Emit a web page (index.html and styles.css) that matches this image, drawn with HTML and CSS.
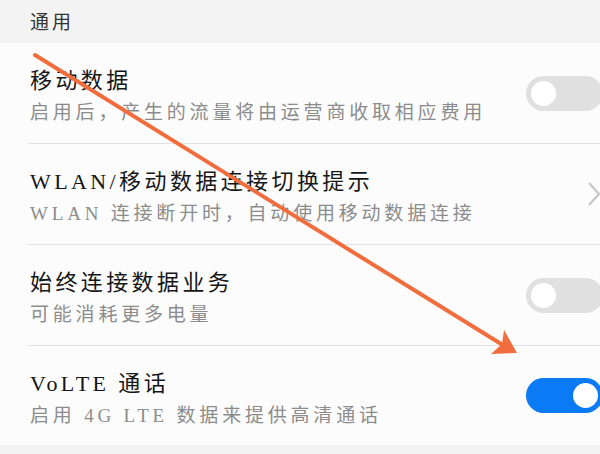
FILE: index.html
```html
<!DOCTYPE html>
<html lang="zh-CN">
<head>
<meta charset="utf-8">
<link rel="stylesheet" href="styles.css">
</head>
<body>
<div class="screen">
  <div class="section-head">通用</div>
  <div class="list">
    <div class="row">
      <div class="texts">
        <div class="title">移动数据</div>
        <div class="sub">启用后，产生的流量将由运营商收取相应费用</div>
      </div>
      <div class="toggle"><span class="knob"></span></div>
    </div>
    <div class="row">
      <div class="texts">
        <div class="title">WLAN/移动数据连接切换提示</div>
        <div class="sub">WLAN 连接断开时，自动使用移动数据连接</div>
      </div>
      <svg class="chevron" width="14" height="24" viewBox="0 0 14 24"><path d="M2 1 L12 12 L2 23" fill="none" stroke="#c6c6c6" stroke-width="2.2"/></svg>
    </div>
    <div class="row">
      <div class="texts">
        <div class="title">始终连接数据业务</div>
        <div class="sub">可能消耗更多电量</div>
      </div>
      <div class="toggle"><span class="knob"></span></div>
    </div>
    <div class="row last">
      <div class="texts">
        <div class="title">VoLTE 通话</div>
        <div class="sub">启用 4G LTE 数据来提供高清通话</div>
      </div>
      <div class="toggle on"><span class="knob"></span></div>
    </div>
  </div>
  <div class="bottom-band"></div>
  <svg class="arrow" width="600" height="454" viewBox="0 0 600 454">
    <line x1="35" y1="55" x2="506" y2="347" stroke="#f26d3d" stroke-width="4" stroke-linecap="round"/>
    <polygon points="517,353 504,330 502,344 491,354" fill="#f26d3d"/>
  </svg>
</div>
</body>
</html>
```
FILE: styles.css
```css
html, body {
  margin: 0;
  padding: 0;
  width: 600px;
  height: 454px;
  overflow: hidden;
  background: #fafafa;
}
.screen {
  position: relative;
  width: 600px;
  height: 454px;
  overflow: hidden;
  font-family: "Liberation Serif", "Noto Sans CJK SC", serif;
}
.section-head {
  height: 43px;
  line-height: 46px;
  background: #f3f3f3;
  padding-left: 30px;
  font-size: 19px;
  letter-spacing: 3px;
  color: #333;
  box-sizing: border-box;
}
.list {
  background: #fcfcfc;
}
.row {
  display: flex;
  align-items: center;
  justify-content: space-between;
  height: 100px;
  margin-left: 28px;
  border-bottom: 1px solid #e2e2e2;
}
.row.last {
  height: 99px;
  border-bottom: none;
}
.texts {
  padding-left: 2px;
  align-self: flex-start;
  padding-top: 22px;
}
.title {
  font-size: 22px;
  line-height: 32px;
  letter-spacing: 3.4px;
  color: #161616;
}
.sub {
  font-size: 19px;
  line-height: 32px;
  letter-spacing: 3.8px;
  color: #8c8c8c;
}
.toggle {
  width: 77px;
  height: 35px;
  border-radius: 18px;
  background: #e0e0e0;
  margin-right: -3px;
  display: flex;
  align-items: center;
  padding: 0 5px;
  box-sizing: border-box;
  flex-shrink: 0;
}
.toggle .knob {
  width: 25px;
  height: 25px;
  border-radius: 50%;
  background: #ffffff;
}
.toggle.on {
  background: #0a7af5;
  justify-content: flex-end;
}
.chevron {
  margin-right: -1px;
  flex-shrink: 0;
}
.bottom-band {
  height: 12px;
  background: #f3f3f3;
}
.arrow {
  position: absolute;
  left: 0;
  top: 0;
  pointer-events: none;
}
```
